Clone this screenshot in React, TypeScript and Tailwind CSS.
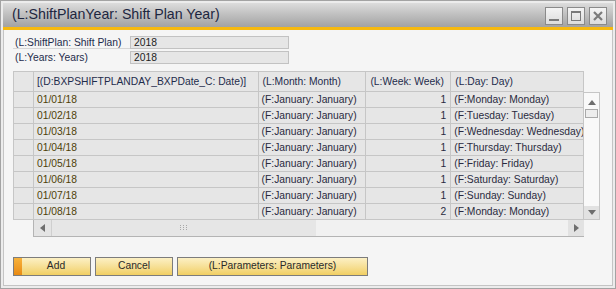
import React from 'react';

const rows = [
  { date: '01/01/18', week: 1, day: 'Monday' },
  { date: '01/02/18', week: 1, day: 'Tuesday' },
  { date: '01/03/18', week: 1, day: 'Wednesday' },
  { date: '01/04/18', week: 1, day: 'Thursday' },
  { date: '01/05/18', week: 1, day: 'Friday' },
  { date: '01/06/18', week: 1, day: 'Saturday' },
  { date: '01/07/18', week: 1, day: 'Sunday' },
  { date: '01/08/18', week: 2, day: 'Monday' },
];

function TitleButton({ kind }: { kind: 'min' | 'max' | 'close' }) {
  return (
    <div className="w-[18px] h-[18px] border border-[#8a8a8a] bg-gradient-to-b from-[#f4f4f4] to-[#dcdcdc] flex items-center justify-center">
      <svg width="12" height="12" viewBox="0 0 12 12">
        {kind === 'min' && <rect x="1" y="9" width="10" height="2" fill="#7a7a7a" />}
        {kind === 'max' && (
          <>
            <rect x="1.5" y="1.5" width="9" height="9" fill="none" stroke="#7a7a7a" />
            <rect x="1" y="1" width="10" height="2" fill="#7a7a7a" />
          </>
        )}
        {kind === 'close' && (
          <path d="M2 2 L10 10 M10 2 L2 10" stroke="#7a7a7a" strokeWidth="2.2" />
        )}
      </svg>
    </div>
  );
}

function FieldRow({ label, value, underline }: { label: string; value: string; underline?: boolean }) {
  return (
    <div className="flex h-[15px] items-start">
      <div className={`w-[117px] h-[13px] pl-[2px] leading-[13px] text-[#1e2c4c] ${underline ? 'border-b border-[#d6d6d6]' : ''}`}>
        {label}
      </div>
      <div className="w-[159px] h-[13px] border border-[#c2c2c2] bg-[#e6e6e6] pl-[3px] leading-[11px] text-[#222]">
        {value}
      </div>
    </div>
  );
}

function Button({ label, width, accent }: { label: string; width: string; accent?: boolean }) {
  return (
    <div className={`${width} h-[19px] border border-[#7c7c7c] bg-gradient-to-b from-[#fcf0c4] to-[#f1cf62] flex items-stretch`}>
      {accent && <div className="w-[8px] bg-gradient-to-b from-[#f7b23a] to-[#e88a12]" />}
      <div className="flex-1 flex items-center justify-center text-[#2a2a2a] leading-none">{label}</div>
    </div>
  );
}

export default function App() {
  return (
    <div
      className="w-[616px] h-[289px] bg-[#ececec] border border-[#a3a3a3] p-[2px] flex flex-col text-[10.3px]"
      style={{ fontFamily: '"Liberation Sans", Arial, sans-serif' }}
    >
      {/* Title bar */}
      <div className="h-[24px] bg-gradient-to-b from-[#dcdcdc] to-[#a2a2a2] flex items-center pl-[9px] pr-[6px]">
        <span className="text-[14.2px] text-[#1d2640] flex-1">(L:ShiftPlanYear: Shift Plan Year)</span>
        <div className="flex gap-[4px] pt-[1px]">
          <TitleButton kind="min" />
          <TitleButton kind="max" />
          <TitleButton kind="close" />
        </div>
      </div>
      <div className="h-[3px] bg-[#f6b90f]" />

      {/* Body */}
      <div className="flex-1 bg-[#f5f5f5] border-x border-b border-[#c4c4c4] flex flex-col pl-[9px] pt-[6px]">
        <FieldRow label="(L:ShiftPlan: Shift Plan)" value="2018" underline />
        <FieldRow label="(L:Years: Years)" value="2018" />

        {/* Grid */}
        <div className="mt-[5px] flex">
          <div className="w-[571px] flex flex-col">
            <div className="border-t border-l border-[#c6c6c6]">
              <div className="flex h-[20px] bg-[#e6e6e6] text-[#1e2c4c]">
                <div className="w-[20px] border-r border-b border-[#c6c6c6]" />
                <div className="w-[225px] border-r border-b border-[#c6c6c6] pl-[3px] flex items-center">[(D:BXPSHIFTPLANDAY_BXPDate_C: Date)]</div>
                <div className="w-[108px] border-r border-b border-[#c6c6c6] pl-[4px] flex items-center">(L:Month: Month)</div>
                <div className="w-[85px] border-r border-b border-[#c6c6c6] pl-[4px] flex items-center">(L:Week: Week)</div>
                <div className="w-[133px] border-r border-b border-[#c6c6c6] pl-[4px] flex items-center">(L:Day: Day)</div>
              </div>
              {rows.map((r) => (
                <div key={r.date} className="flex h-[16px] bg-[#e6e6e6]">
                  <div className="w-[20px] border-r border-b border-[#c6c6c6]" />
                  <div className="w-[225px] border-r border-b border-[#c6c6c6] pl-[3px] flex items-center text-[#4e3f08]">{r.date}</div>
                  <div className="w-[108px] border-r border-b border-[#c6c6c6] pl-[3px] flex items-center text-[#2a2a40]">(F:January: January)</div>
                  <div className="w-[85px] border-r border-b border-[#c6c6c6] pr-[4px] flex items-center justify-end text-[#2a2a40]">{r.week}</div>
                  <div className="w-[133px] border-r border-b border-[#c6c6c6] pl-[3px] flex items-center text-[#2a2a40] whitespace-nowrap overflow-hidden">(F:{r.day}: {r.day})</div>
                </div>
              ))}
            </div>
            {/* Horizontal scrollbar */}
            <div className="ml-[20px] h-[17px] flex border-l border-b border-[#b4b4b4] bg-[#f1f1f1]">
              <div className="w-[17px] bg-[#e4e4e4] flex items-center justify-center">
                <svg width="5" height="8" viewBox="0 0 5 8"><path d="M5 0 L0 4 L5 8 Z" fill="#6e6e6e" /></svg>
              </div>
              <div className="w-[265px] bg-[#e6e6e6] border-l border-[#cfcfcf] flex items-center justify-center">
                <svg width="8" height="6" viewBox="0 0 8 6">
                  {[0, 3, 6].map((x) => [0, 2, 4].map((y) => <rect key={`${x}-${y}`} x={x} y={y} width="1" height="1" fill="#a8a8a8" />))}
                </svg>
              </div>
              <div className="flex-1" />
              <div className="w-[16px] bg-[#e2e2e2] flex items-center justify-center">
                <svg width="5" height="8" viewBox="0 0 5 8"><path d="M0 0 L5 4 L0 8 Z" fill="#6e6e6e" /></svg>
              </div>
            </div>
          </div>
          {/* Vertical scrollbar */}
          <div className="w-[16px] flex flex-col">
            <div className="h-[21px]" />
            <div className="h-[128px] bg-[#f9f9f9] border border-l-0 border-[#c6c6c6] flex flex-col">
              <div className="h-[12px] flex items-end justify-center">
                <svg width="8" height="5" viewBox="0 0 8 5"><path d="M0 5 L4 0 L8 5 Z" fill="#6e6e6e" /></svg>
              </div>
              <div className="mt-[4px] h-[9px] mx-[1px] border border-[#a9a9a9] bg-[#ededed]" />
              <div className="flex-1" />
              <div className="h-[13px] bg-[#e2e2e2] flex items-center justify-center">
                <svg width="8" height="5" viewBox="0 0 8 5"><path d="M0 0 L8 0 L4 5 Z" fill="#6e6e6e" /></svg>
              </div>
            </div>
          </div>
        </div>

        {/* Buttons */}
        <div className="mt-[20px] flex gap-[4px]">
          <Button label="Add" width="w-[78px]" accent />
          <Button label="Cancel" width="w-[78px]" />
          <Button label="(L:Parameters: Parameters)" width="w-[191px]" />
        </div>
      </div>
    </div>
  );
}
